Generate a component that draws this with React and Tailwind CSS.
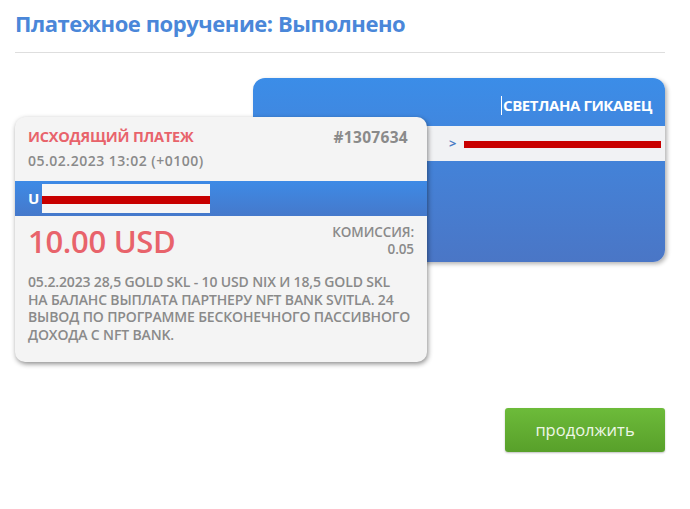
export default function App() {
  return (
    <div className="w-[690px] h-[509px] bg-white px-[15px] pt-[8px] relative" style={{ fontFamily: '"Open Sans", "Noto Sans", sans-serif' }}>
      <h1 className="text-[22px] font-bold text-[#4a87d9] leading-[30px] tracking-[-0.45px]">Платежное поручение: Выполнено</h1>
      <div className="mt-[14px] h-px bg-[#dedede] w-[650px]" />
      <div className="relative mt-[25px] h-[290px]">
        <div className="ml-[238px] w-[412px] h-[184px] rounded-[12px] bg-gradient-to-b from-[#3b8de8] to-[#4a76c6] shadow-[2px_2px_4px_rgba(0,0,0,0.3)] overflow-hidden flex flex-col">
          <div className="h-[48px] flex items-center justify-end pr-[13px] pt-[6px]">
            <span className="w-px h-[19px] bg-white mr-px" />
            <span className="text-white font-bold text-[15px] tracking-[-0.4px]">СВЕТЛАНА ГИКАВЕЦ</span>
          </div>
          <div className="h-[35px] bg-[#f1f2f4] flex items-center pl-[196px] pr-[4px]">
            <span className="text-[#4a7cc4] text-[13px] font-bold mr-[8px]">&gt;</span>
            <div className="flex-1 h-[7px] bg-[#c80000] mt-[2px]" />
          </div>
        </div>
        <div className="absolute left-0 top-[39px] w-[412px] h-[245px] rounded-[10px] bg-[#f4f4f4] shadow-[1px_2px_5px_rgba(0,0,0,0.45)] overflow-hidden flex flex-col">
          <div className="px-[13px] pt-[10px] flex justify-between items-start">
            <div>
              <div className="text-[#e8636b] text-[14.5px] font-bold leading-[20px] tracking-[-0.2px]">ИСХОДЯЩИЙ ПЛАТЕЖ</div>
              <div className="text-[#8a8a8a] text-[14px] font-semibold leading-[20px] mt-[4px] tracking-[0.5px]">05.02.2023 13:02 (+0100)</div>
            </div>
            <div className="text-[#8a8a8a] text-[15.5px] font-bold leading-[20px] pr-[6px] tracking-[0.3px]">#1307634</div>
          </div>
          <div className="mt-[10px] h-[35px] bg-gradient-to-b from-[#3d8ae6] to-[#4579cb] flex items-center pl-[13px]">
            <span className="text-white font-bold text-[15px]">U</span>
            <div className="ml-[3px] w-[168px] h-[29px] bg-[#f6f6f6] flex items-center">
              <div className="w-full h-[8px] bg-[#c80000] mt-[2px]" />
            </div>
          </div>
          <div className="px-[13px] pt-[5px] flex justify-between items-start">
            <div className="text-[#e8636b] text-[31px] font-semibold leading-[40px] tracking-[-0.3px]">10.00 USD</div>
            <div className="flex flex-col items-end text-[#8a8a8a] text-[13.5px] font-semibold pt-[3px] tracking-[-0.1px]">
              <span className="leading-[17px]">КОМИССИЯ:</span>
              <span className="leading-[17px]">0.05</span>
            </div>
          </div>
          <div className="px-[13px] pt-[12px] text-[#8a8a8a] text-[14px] font-semibold leading-[17.5px] tracking-[-0.15px] whitespace-nowrap">
            <div>05.2.2023 28,5 GOLD SKL - 10 USD NIX И 18,5 GOLD SKL</div>
            <div>НА БАЛАНС ВЫПЛАТА ПАРТНЕРУ NFT BANK SVITLA. 24</div>
            <div>ВЫВОД ПО ПРОГРАММЕ БЕСКОНЕЧНОГО ПАССИВНОГО</div>
            <div>ДОХОДА С NFT BANK.</div>
          </div>
        </div>
      </div>
      <div className="flex justify-end w-[650px] mt-[40px]">
        <button className="w-[160px] h-[44px] rounded-[3px] bg-gradient-to-b from-[#6dbb3a] to-[#58a02a] text-[#eef7e6] text-[16.5px] shadow-[0_1px_2px_rgba(0,0,0,0.25)]">продолжить</button>
      </div>
    </div>
  );
}
